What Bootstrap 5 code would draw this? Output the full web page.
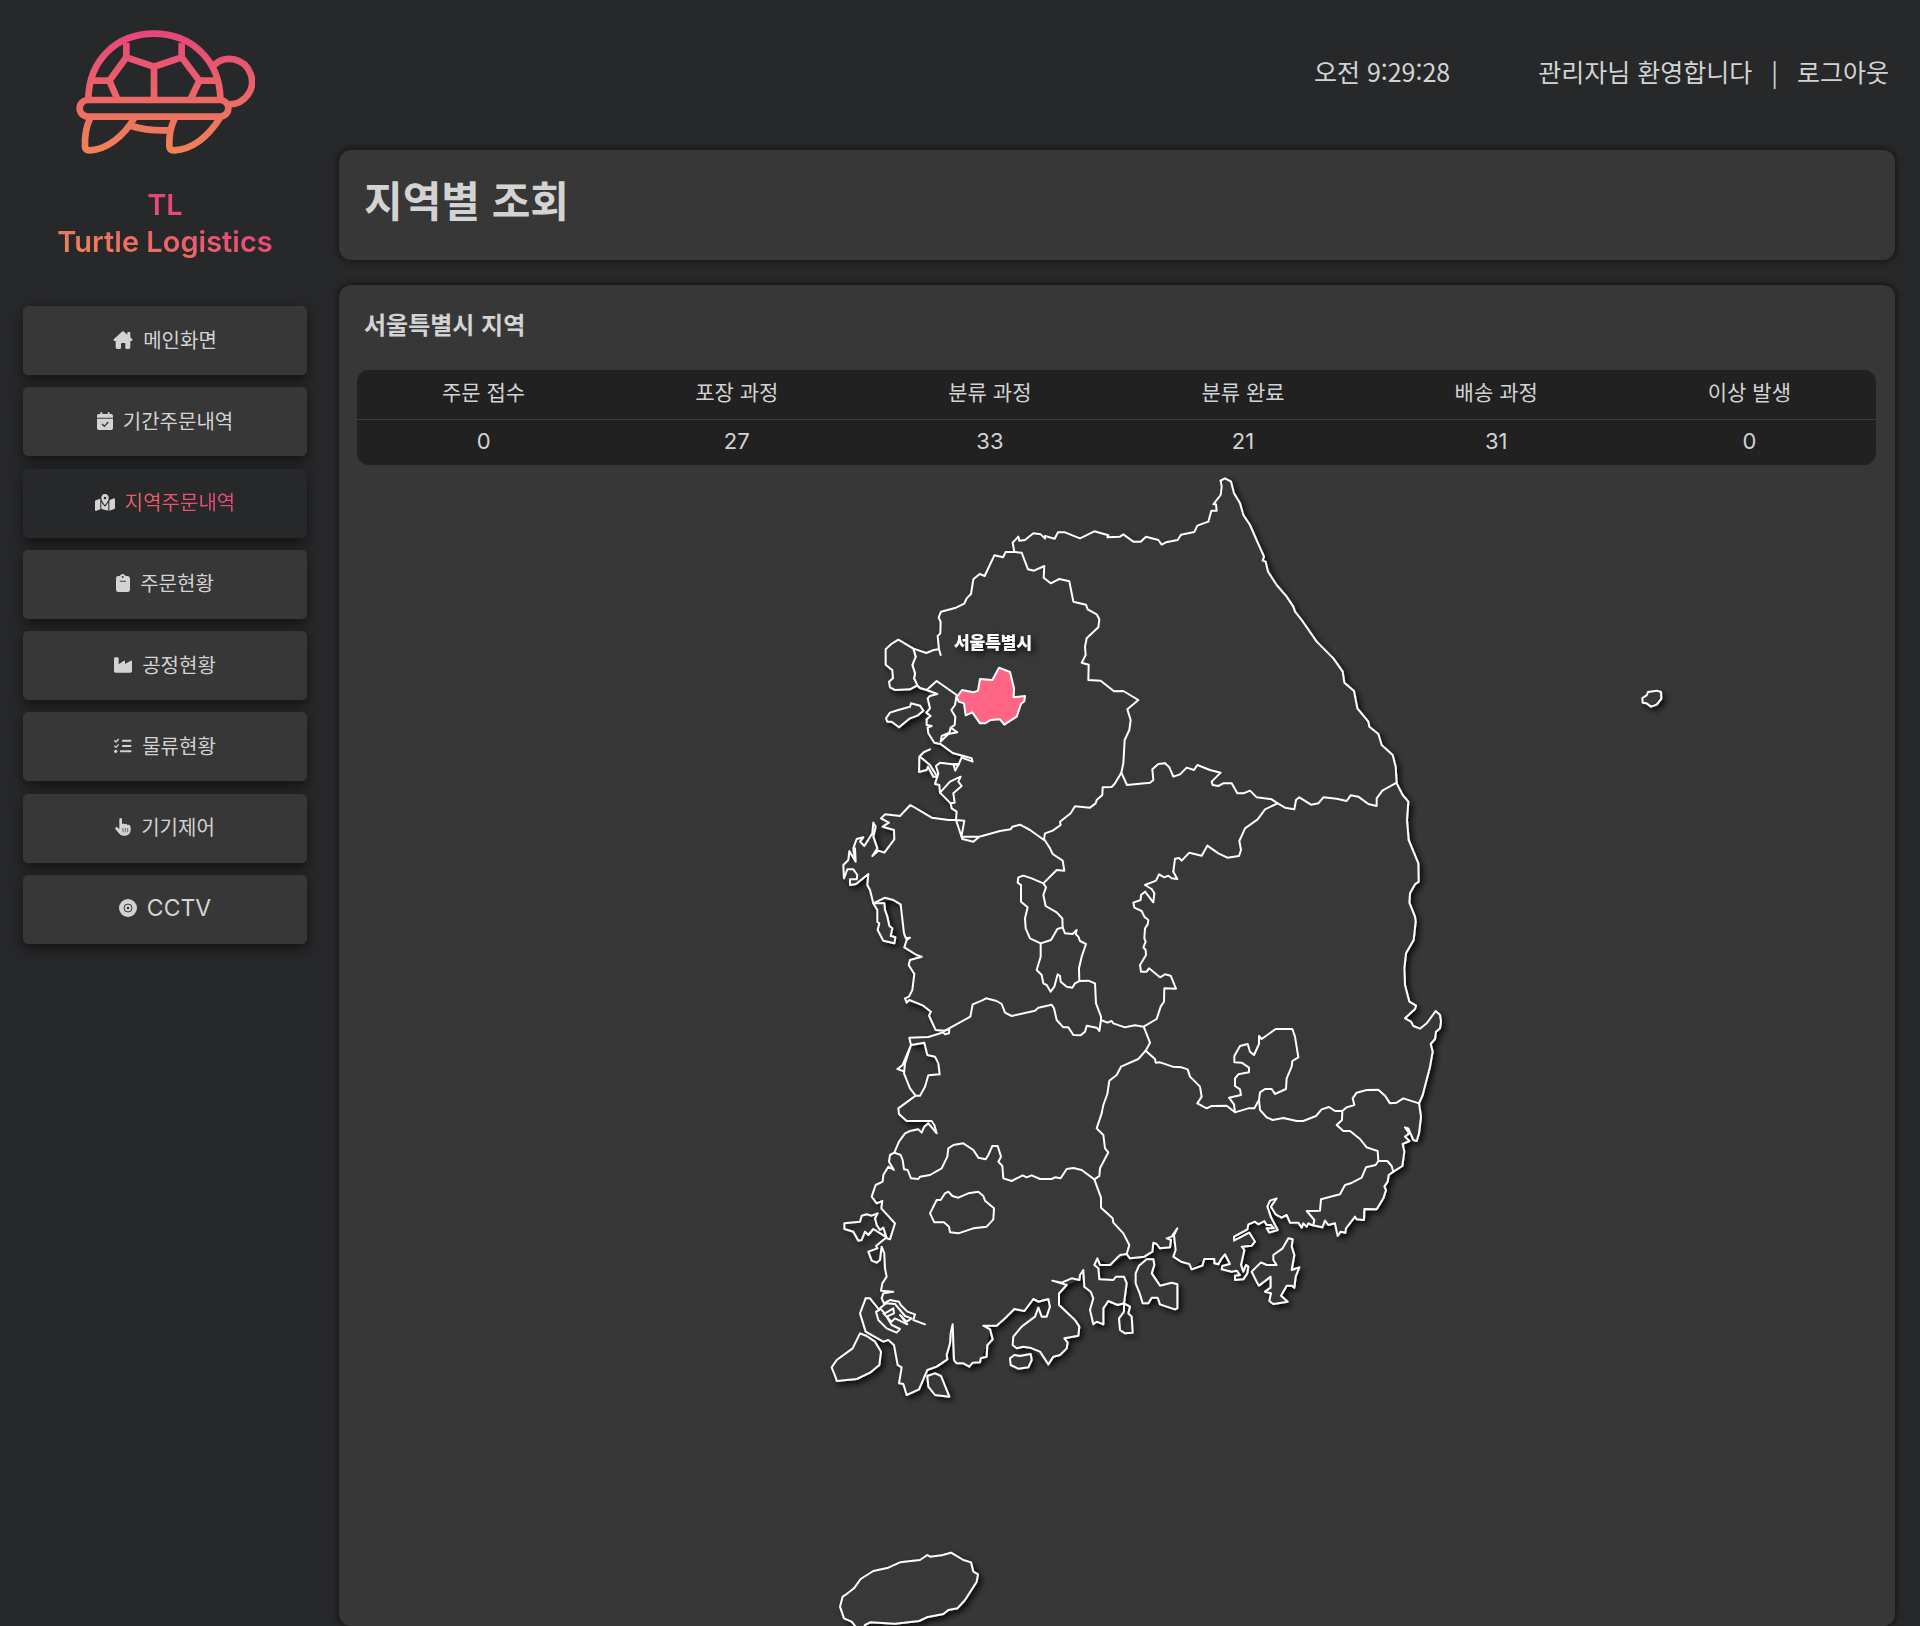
<!DOCTYPE html>
<html lang="ko" data-bs-theme="dark">
<head>
<meta charset="utf-8">
<meta name="viewport" content="width=device-width, initial-scale=1">
<title>Turtle Logistics</title>
<link rel="stylesheet" href="https://cdn.jsdelivr.net/npm/bootstrap@5.3.0/dist/css/bootstrap.min.css">
<style>
body{background:#27282a;color:#d3d3d3;font-family:"Noto Sans CJK KR",sans-serif}
.side{width:330px;padding:0 23px}
.brand{height:306px;padding-top:29px;text-decoration:none}
.brand-name{font:600 29px/37px Inter,sans-serif;background:linear-gradient(to top right,#f08355 10%,#e6457b 65%);-webkit-background-clip:text;background-clip:text;color:transparent;margin-top:31px}
.menu{height:638px}
.menu-item{height:69px;gap:10px;padding-bottom:2px;border-radius:5px;background:#373737;color:#d3d3d3;font-size:20px;line-height:28px;text-decoration:none;box-shadow:0 5px 14px rgba(0,0,0,.55)}
.menu-item svg{fill:#d3d3d3}
.menu-item.current{background:#27282a}
.menu-item.current span{background:linear-gradient(to right,#ee6068,#e2467c);-webkit-background-clip:text;background-clip:text;color:transparent}
.menu-item .latin{font-family:Inter,sans-serif;font-size:23px}
.content-area{min-width:0;padding:0 25px 0 9px}
.topline{height:150px;padding:0 6px 8px 0;font-size:25px;line-height:36px}
.topline a{color:inherit;text-decoration:none}
.clock{margin-right:88px}
.bar{margin:0 19px}
.panel{background:#373737;border-radius:12px;box-shadow:0 0 8px rgba(0,0,0,.7)}
.panel h1,.panel h2{color:#d3d3d3;font-weight:700}
.panel-title{height:110px;padding:24px 25px;margin-bottom:25px}
.panel-title h1{font-size:42px;line-height:50px;margin:0}
.panel-map{padding:24px 19px 0 18px;overflow:hidden}
.panel-map h2{font-size:24px;line-height:30px;margin:0 7px 31px}
.stat-wrap{border-radius:12px;overflow:hidden;background:#212121}
.stat{width:100%;table-layout:fixed;text-align:center}
.stat th{height:49px;padding:0 0 6px;font-size:21px;line-height:30px;font-weight:400;border-bottom:1px solid #3b3b3b}
.stat td{height:46px;padding:0 0 3px;font-family:Inter,sans-serif;font-size:22px;line-height:30px}
.map{width:100%;height:auto}
.map path{fill:none;stroke:#fff;stroke-width:6;stroke-linejoin:round;stroke-linecap:round}
.map .ground,.map .isle{fill:#373737}
.map .seoul{fill:#ff6584}
.map text{font-size:17px;font-weight:900;fill:#fff;text-anchor:middle}
</style>
<script src="https://cdn.jsdelivr.net/npm/bootstrap@5.3.0/dist/js/bootstrap.bundle.min.js"></script>
</head>
<body>
<div class="d-flex min-vh-100">
<aside class="side flex-shrink-0">
  <a href="#" class="brand d-flex flex-column align-items-center text-center">
    <svg width="180" height="126" viewBox="225 87 540 378" fill="none" stroke="url(#lg)" stroke-width="20" stroke-linejoin="round" aria-hidden="true">
      <defs><linearGradient id="lg" gradientUnits="userSpaceOnUse" x1="0" y1="90" x2="0" y2="462"><stop stop-color="#e6457b"/><stop offset="1" stop-color="#f08355"/></linearGradient></defs>
      <path d="M265 294C268 180 350 101 462 101S658 180 661 294"/>
      <path d="M642 195A68 68 0 1 1 687 313"/>
      <rect x="239" y="300" width="446" height="50" rx="25"/>
      <path stroke-linejoin="miter" d="M379 128V172L328 242H275M379 172L462 200L545 172V128M545 172L598 242H655M462 200V300M328 242L352 297M598 242L572 297"/>
      <path d="M270 356C256 385 254 415 255 440Q257 452 270 451C320 448 370 410 402 356M524 356C509 385 507 415 508 440Q510 452 523 451C580 448 625 408 660 354M394 378Q440 393 506 391"/>
    </svg>
    <span class="brand-name">TL<br>Turtle Logistics</span>
  </a>
  <nav class="menu d-flex flex-column justify-content-between">
    <a href="#" class="menu-item d-flex align-items-center justify-content-center"><svg width="20" height="18" viewBox="0 0 60 54"><path d="M30 0Q31 0 33 2L43 11V5Q43 3 45 3H50Q52 3 52 5V19L58 25Q60 29 56 30H52V49Q52 54 47 54H41Q37 54 37 50V38Q37 36 35 36H27Q24 36 24 39V50Q24 54 20 54H13Q8 54 8 49V30H4Q0 29 2 25L27 2Q29 0 30 0Z"/></svg><span>메인화면</span></a>
    <a href="#" class="menu-item d-flex align-items-center justify-content-center"><svg width="16" height="18" viewBox="0 0 48 54"><path d="M10 2Q13 -2 16 2V6H32V2Q35 -2 38 2V6H43Q48 6 48 11V17H0V11Q0 6 5 6H10ZM0 20H48V49Q48 54 43 54H5Q0 54 0 49Z"/><path d="M15 36L22 43L34 30" fill="none" stroke="#373737" stroke-width="4"/></svg><span>기간주문내역</span></a>
    <a href="#" class="menu-item current d-flex align-items-center justify-content-center" aria-current="page"><svg width="20" height="17" viewBox="0 0 60 51"><path fill-rule="evenodd" d="M30 0Q41 1 41 12Q41 20 30 34Q19 20 19 12Q19 1 30 0ZM30 8A4 4 0 1 0 30 16A4 4 0 1 0 30 8Z"/><path d="M0 22Q0 20 2 19L16 14V46L3 51Q0 51 0 48ZM19 24Q26 35 30 38Q34 35 40 25V50L19 45ZM43 19L57 13Q60 13 60 16V42Q60 44 58 45L43 50Z"/></svg><span>지역주문내역</span></a>
    <a href="#" class="menu-item d-flex align-items-center justify-content-center"><svg width="14" height="18" viewBox="0 0 42 54"><path fill-rule="evenodd" d="M11 6Q14 0 20 0Q26 0 29 6H35Q42 7 42 13V47Q42 54 35 54H7Q0 54 0 47V13Q0 6 7 6ZM20 6A3 3 0 1 0 20 12A3 3 0 1 0 20 6ZM11 20V23H30V20Z"/></svg><span>주문현황</span></a>
    <a href="#" class="menu-item d-flex align-items-center justify-content-center"><svg width="18" height="16" viewBox="0 0 54 46"><path d="M0 4Q0 0 4 0H10Q14 0 14 4V21L30 10Q33 9 33 12V20L50 10Q54 9 54 13V41Q54 46 49 46H5Q0 46 0 41Z"/></svg><span>공정현황</span></a>
    <a href="#" class="menu-item d-flex align-items-center justify-content-center"><svg width="18" height="16" viewBox="0 0 54 46"><path d="M1 6L6 11L14 2M1 22L6 27L14 18" fill="none" stroke="#d3d3d3" stroke-width="4"/><path d="M25 4H51Q54 7 51 10H25Q22 7 25 4ZM25 20H51Q54 23 51 26H25Q22 23 25 20ZM19 36H51Q54 39 51 42H19Q16 39 19 36Z"/><circle cx="5" cy="39" r="5"/></svg><span>물류현황</span></a>
    <a href="#" class="menu-item d-flex align-items-center justify-content-center"><svg width="16" height="18" viewBox="0 0 48 54"><path d="M13 4Q13 0 17 0Q21 0 21 4V19Q25 14 29 19Q34 15 37 21Q45 18 47 27V37Q46 51 32 53H25Q18 53 13 47L1 33Q-1 28 4 27Q7 27 13 33Z"/><path d="M24 30V43M31 30V43M38 30V43" stroke="#373737" stroke-width="2"/></svg><span>기기제어</span></a>
    <a href="#" class="menu-item d-flex align-items-center justify-content-center"><svg width="18" height="18" viewBox="0 0 54 54"><circle cx="27" cy="27" r="27"/><circle cx="27" cy="27" r="12" fill="none" stroke="#373737" stroke-width="3"/><circle cx="27" cy="27" r="4" fill="#373737"/></svg><span class="latin">CCTV</span></a>
  </nav>
</aside>
<main class="content-area flex-grow-1 d-flex flex-column">
  <header class="topline d-flex align-items-center justify-content-end">
    <time class="clock">오전 9:29:28</time><span>관리자님 환영합니다</span><span class="bar">|</span><a href="#">로그아웃</a>
  </header>
  <section class="panel panel-title"><h1>지역별 조회</h1></section>
  <section class="panel panel-map flex-grow-1">
    <h2>서울특별시 지역</h2>
    <div class="stat-wrap"><table class="stat">
      <thead><tr><th scope="col">주문 접수</th><th scope="col">포장 과정</th><th scope="col">분류 과정</th><th scope="col">분류 완료</th><th scope="col">배송 과정</th><th scope="col">이상 발생</th></tr></thead>
      <tbody><tr><td>0</td><td>27</td><td>33</td><td>21</td><td>31</td><td>0</td></tr></tbody>
    </table></div>
    <svg class="map d-block" viewBox="357 465 1519 1161" role="img" aria-label="대한민국 지도">
      <defs><filter id="sh" filterUnits="userSpaceOnUse" x="357" y="465" width="1519" height="1200"><feDropShadow dx="3" dy="3" stdDeviation="3" flood-color="#000" flood-opacity=".8"/></filter></defs>
      <g filter="url(#sh)">
        <polygon class="ground" points="1014,552 1006,552 1003,557 994,555 985,576 980,574 973,579 971,594 964,604 941,612 939,617 941,622 938,636 939,649 926,653 913,649 912,665 917,685 927,690 930,696 926,713 928,733 934,743 941,744 953,753 972,758 962,758 958,765 940,763 936,766 935,784 940,793 951,803 957,812 956,820 932,818 910,805 900,816 885,814 881,818 883,827 894,830 894,839 884,853 878,851 873,837 872,833 864,846 857,839 853,848 855,860 843,865 844,878 850,885 856,884 868,874 867,885 870,890 873,903 893,900 901,904 904,933 909,938 904,947 917,955 910,960 909,965 914,974 912,990 907,1002 923,1006 931,1012 936,1030 945,1031 928,1037 909,1038 911,1045 924,1043 927,1055 935,1057 940,1074 928,1075 925,1087 920,1096 916,1096 898,1108 899,1114 907,1121 932,1121 924,1127 905,1133 894,1153 889,1162 883,1175 872,1197 882,1201 881,1208 895,1223 890,1239 883,1240 885,1268 881,1291 884,1303 880,1308 878,1312 866,1298 860,1313 866,1332 883,1340 894,1345 898,1365 902,1367 899,1383 907,1395 919,1389 927,1370 947,1359 953,1324 954,1360 969,1367 980,1362 987,1345 990,1330 983,1326 997,1326 1014,1309 1024,1311 1033,1299 1048,1299 1050,1307 1047,1317 1042,1317 1038,1308 1022,1327 1012,1340 1017,1348 1030,1348 1048,1364 1053,1357 1067,1348 1064,1338 1078,1336 1079,1327 1059,1305 1060,1292 1067,1285 1079,1280 1083,1270 1084,1287 1093,1298 1090,1310 1093,1324 1103,1324 1103,1308 1108,1301 1124,1304 1127,1283 1124,1277 1113,1280 1099,1279 1098,1268 1097,1258 1110,1265 1127,1254 1130,1258 1144,1257 1152,1252 1153,1243 1160,1248 1170,1247 1175,1230 1173,1257 1192,1269 1204,1259 1214,1259 1218,1264 1225,1254 1230,1264 1222,1269 1240,1275 1241,1265 1244,1250 1242,1247 1255,1242 1248,1233 1234,1240 1234,1237 1247,1229 1248,1224 1264,1221 1273,1231 1278,1230 1271,1217 1267,1207 1277,1198 1271,1207 1276,1214 1287,1215 1290,1223 1302,1228 1312,1225 1322,1227 1335,1223 1338,1236 1345,1233 1355,1217 1364,1220 1364,1209 1377,1209 1386,1190 1389,1175 1393,1172 1402,1166 1404,1152 1403,1144 1409,1141 1405,1127 1408,1128 1413,1140 1417,1141 1421,1117 1419,1103 1423,1095 1430,1067 1433,1052 1431,1044 1436,1032 1441,1022 1436,1011 1420,1029 1413,1026 1405,1018 1416,1006 1409,1002 1405,985 1404,968 1406,953 1414,940 1416,922 1409,903 1410,893 1415,884 1419,882 1418,863 1409,840 1407,820 1408,802 1397,783 1396,767 1393,755 1382,745 1378,734 1369,727 1357,708 1354,691 1344,683 1343,672 1333,658 1317,642 1295,612 1277,585 1266,562 1258,543 1243,515 1231,482 1225,478 1221,481 1221,495 1216,511 1208,522 1194,532 1178,540 1162,545 1146,537 1130,540 1123,534 1094,531 1080,538 1058,532 1045,539 1033,533 1018,538 1013,543"/>
        <!-- north-west coast and Incheon -->
        <g transform="translate(830 460) scale(.333333)">
          <path d="M553 276L527 276 519 292 493 286 464 348 449 342 430 358 423 402 410 415 403 431 378 443 333 455 326 472 332 486 331 520 323 528 327 568 332 585 327 568 311 570 289 579 250 566 257 590 247 615 255 640 252 655 262 676 270 684 290 690 322 702 300 708 293 715 300 745 289 758 302 768 290 778 290 795 305 798 293 803 295 820 313 848 332 852 368 879 425 895 428 905 395 893 385 915 330 908 318 918 325 940 315 972 328 975 330 998 362 1030 365 1045 380 1055 378 1080"/>
          <path class="isle" d="M250 566L205 539 184 552 167 568 167 614 180 625 187 630 189 655 177 665 180 682 195 690 240 688 262 676 252 655 255 640 247 615 257 590Z"/>
          <path class="isle" d="M168 775L180 758 205 750 240 740 243 730 270 737 280 752 262 767 240 775 207 802 185 785 172 785Z"/>
          <path d="M300 868L282 876 268 890 267 936 290 930 294 920 310 950 322 950 300 915 272 892"/>
          <path d="M370 912L376 932 386 912Z"/>
          <path d="M378 1080L355 1080 305 1073 241 1035 210 1068 165 1063 153 1075 177 1088 158 1100 192 1110 193 1138 163 1178 145 1172 127 1188 142 1165 130 1130 137 1100 130 1088 127 1120 103 1158 90 1145 100 1132 80 1137 70 1165 75 1200"/>
        </g>
        <!-- east coast, north part -->
        <g transform="translate(1130 460) scale(.333333)">
          <path d="M272 62L285 55 303 65 312 100 330 130 340 165 360 195 383 248 402 290 398 302 407 305 414 335 440 375 470 410 490 440 495 455 515 480 560 545 610 595 638 635 643 668 672 693 682 745 715 785 718 800 745 822 755 855 788 885 797 920 800 970 818 1005 835 1025 831 1080 836 1140"/>
        </g>
        <!-- west coast -->
        <g transform="translate(830 840) scale(.333333)">
          <path d="M75 25L77 65 58 33 55 60 40 75 42 115 52 88 70 88 82 105 80 118 60 118 60 135 78 132 115 102 112 135 120 150 130 190 165 173 190 180 212 193 222 280 228 295 240 293 230 300 223 322 260 345 275 350 240 360 236 375 253 402 247 450 237 470 225 475 230 488 238 480 280 497 303 515 297 527 317 570 345 572 358 567 357 580 345 583 340 577 295 591 238 593 243 615 283 608 292 645 315 650 325 670 329 703 295 706 285 740 270 767 257 767 205 805 207 822 230 843 305 843 313 855 320 880 295 850 283 860 275 878 265 868 240 873 225 880 207 905 193 938"/>
          <path class="isle" d="M130 190L163 190 165 210 172 230 178 258 187 265 182 288 196 292 193 310 160 302 143 270 148 250 142 245 142 210Z"/>
        </g>
        <!-- east coast, south part -->
        <g transform="translate(1130 840) scale(.333333)">
          <path d="M836 0L865 70 866 125 855 133 840 160 838 188 855 230 857 245 851 300 828 340 823 385 825 435 838 485 858 497 855 507 825 535 843 545 850 558 870 566 890 550 917 513 930 525 933 545 930 565 918 575 915 597 902 612 908 635 900 680 878 765 867 790 873 830 867 880 860 903 850 900 835 865 825 862 838 880 825 890 838 903 818 912 823 935 817 978 790 995"/>
        </g>
        <!-- south coast -->
        <g transform="translate(1110 1130) scale(.333333)">
          <path d="M850 125L836 135 833 155 823 170 828 180 820 205 800 238 763 237 762 270 740 268 735 260 708 295 706 308 692 305 683 318 675 280 655 285 645 272 637 292 605 285 595 280 590 290 580 280 575 293 565 278 540 278 530 255 515 263 497 253 483 230 500 205 480 212 472 230 483 262 490 275 503 300 478 308 470 295 492 295 483 285 470 285 463 273 445 283 435 275 415 283 412 298 372 320 372 332 418 308 435 335 425 347 395 350 403 360 393 405 400 425 408 405 415 410 412 430 400 448 375 450 375 437 390 435 380 422 365 425 335 418 337 408 360 402 345 373 335 385 325 403 313 400 313 387 283 387 277 407 245 418 238 402 213 395 190 380 197 360 192 315 202 295 185 320 170 325 183 330 180 352 150 355 140 342 130 338 127 365 103 380 60 385 50 372"/>
          <path class="isle" d="M425 425L453 397 470 405 500 405 490 390 490 375 518 355 535 325 548 328 545 350 553 375 545 420 568 412 557 440 553 473 545 467 530 467 513 497 533 515 490 522 478 513 483 490 465 485 482 473 482 440 447 467 440 455Z"/>
          <path class="isle" d="M110 388L130 388 133 405 125 430 150 467 185 458 202 463 202 535 195 538 150 523 143 503 125 503 115 520 98 520 88 487 77 460 77 430 87 407Z"/>
        </g>
        <!-- south-west coast -->
        <g transform="translate(820 1130) scale(.333333)">
          <path d="M223 68L210 75 207 95 222 120 205 110 190 135 188 155 167 165 155 200 170 220 187 213 184 235 225 280 210 328 200 325 190 293 180 300 170 285 165 265 173 250 155 257 140 253 125 257 120 275 73 280 73 297 100 305 115 332 125 330 135 305 145 315 160 297 200 322 168 348 172 355 145 365 155 392 170 398 180 390 185 350 193 370 195 415 200 440 187 460 183 482 220 485 190 490 185 505 192 520 210 510 237 515 242 525 262 545 285 553 280 570 315 583"/>
          <path d="M137 505L150 505 178 540 168 545 175 570 200 595 230 608 240 597 215 585 200 560 222 550 220 535 195 550 180 535 198 520 225 522 240 540 255 558 275 565 260 575 240 555 262 583 225 565 215 575 190 550"/>
          <path d="M137 505L120 550 137 605 190 635 205 630 222 645 233 705 245 712 237 760 250 762 260 795 297 778 322 720 350 710 382 688 380 675 390 640 392 610 398 583 402 690 410 700 430 700 448 710 458 698 480 697 482 685 500 680 502 645 518 628 510 598 490 587 530 587 560 560 583 537 613 543 640 507 655 515 685 507 690 530 680 560 665 560 655 533 645 560 605 590 580 620 578 645 590 655 610 650 630 653 660 665 685 703 700 680 720 675 740 655 743 638 733 625 775 617 778 590 765 570 717 525 717 490 740 465 697 452 725 458 755 445 778 450 780 435 790 420 793 470 812 485 820 505 810 540 820 583 830 575 850 583 850 535 865 513 893 525 912 520 912 545 897 565 900 600 915 610 938 608 935 560 925 550 930 530 912 520 920 460 912 440 888 440 880 450 838 448 835 415 823 405 832 385 840 405 870 405 900 375 920 372"/>
          <path class="isle" d="M120 610L140 618 165 635 183 665 178 705 150 728 110 747 50 753 47 742 35 712 50 690 98 655Z"/>
          <path class="isle" d="M583 675L570 685 572 705 595 716 625 712 635 690 632 672 600 678Z"/>
          <path class="isle" d="M322 738L345 730 363 738 388 800 345 795 325 770Z"/>
        </g>
        <!-- Jeju and Ulleungdo -->
        <g transform="translate(820 1530) scale(.333333)">
          <path class="isle" d="M115 300L95 275 72 265 60 230 68 200 80 192 102 175 122 147 160 123 205 113 240 97 300 90 322 75 330 80 365 76 393 68 430 90 453 97 460 125 474 133 470 155 435 210 412 235 385 240 370 252 320 262 297 273 225 281 150 277 135 285 128 300Z"/>
          <path class="isle" d="M2467-2496L2480-2504 2484-2514 2510-2518 2523-2514 2524-2494 2510-2476 2493-2470 2480-2480 2468-2482Z"/>
        </g>
      </g>
      <!-- inner province borders -->
      <g>
        <g transform="translate(830 460) scale(.333333)">
          <path d="M553 276L548 248 565 230 568 242 585 240 610 220 632 223 645 236 645 228 674 236 684 217 705 217 750 235 793 214 835 226 832 232 870 230 880 223 910 245 932 245 948 230 985 240 995 254 1008 247 1043 240 1053 224 1093 216 1102 197 1135 185 1144 152 1160 152 1158 133 1150 133 1172 105 1175 80 1172 62"/>
          <path d="M553 276L575 278 594 328 612 332 643 318 641 353 662 370 688 357 718 364 730 425 768 434 773 448 800 463 808 478 805 502 770 535 765 560 767 585 755 608 776 614 775 660 812 662 852 694 880 693 925 720 892 748 902 780 898 810 884 840 880 910 874 938 891 975 960 968 970 960 967 928 985 912 1005 910"/>
          <path d="M874 938L855 970 845 981 818 982 817 1005 800 1020 797 1030 780 1043 735 1039 722 1060 690 1085 692 1095 668 1112 645 1120 642 1137 660 1165 668 1182 698 1202 703 1232 680 1230 640 1270"/>
          <path d="M378 1080L403 1082 397 1115 394 1130 448 1130 430 1145 397 1137 378 1080M448 1130L510 1113 542 1108 547 1100 570 1094 600 1110 642 1140"/>
          <path d="M290 690L320 663 380 705 375 735 364 750 376 770 374 795 362 803 382 817 355 822 332 845 335 828 358 818 362 803M330 998L360 965 392 950 385 965 395 978 370 1000 374 1028 362 1030"/>
          <path class="seoul" d="M380 712L396 690 430 697 444 692 450 657 487 660 507 623 540 636 552 685 551 712 585 708 583 724 573 732 560 770 523 794 510 778 482 780 465 790 450 790 427 757 407 766 402 730 386 725Z"/>
        </g>
        <g transform="translate(1130 460) scale(.333333)">
          <path d="M105 910L118 922 130 950 150 943 170 923 192 930 202 915 240 930 272 938 245 965 248 975 265 978 280 970 305 970 322 1000 340 1000 360 992 380 1012 425 1018 443 1030 465 1043 493 1048 498 1020 508 1012 543 1034 565 1030 580 1012 620 1016 650 1023 662 1006 685 1010 715 1032 740 1038 740 1015 757 992 800 968"/>
          <path d="M443 1030L405 1048 383 1078 345 1105 328 1143 333 1170 327 1188 292 1193 265 1180 232 1157 215 1187 178 1178 155 1202 147 1194 135 1196 130 1235"/>
        </g>
        <g transform="translate(830 840) scale(.333333)">
          <path d="M345 572L421 530 428 493 455 482 468 475 500 483 515 492 525 518 545 528 615 512 625 503 665 494 672 505 680 540 700 562 715 562 730 585 752 586 765 575 770 557 800 563 808 573 813 540"/>
          <path d="M640 130L605 115 580 107 565 112 563 128 573 135 573 185 593 202 585 235 587 265 600 295 632 310 663 300 682 267 698 262 697 235 680 217 647 198 640 165 648 142Z"/>
          <path d="M632 310L632 350 620 390 635 405 640 430 650 435 662 455 673 440 683 403 690 408 692 425 710 440 727 443 735 430 748 423 747 385 755 350 768 312 750 303 745 290 737 282 740 270 728 282 705 280 698 262M748 423L775 422 795 430 798 490 813 530 813 540 832 548 845 543 850 550 885 562 915 556 941 560 960 608 947 632 925 657 873 680 860 705 838 722 832 762 820 795 815 820 800 865 820 885 825 925 835 937 810 985 808 1008 793 1018"/>
          <path d="M243 615L218 675 202 687 222 694M257 767L240 745 222 700 225 670 243 615M193 938L212 945 218 960 222 988 233 990 243 1015 265 1017 270 1010 300 1005 335 985 352 950 355 925 370 915 400 910 430 930 445 953 467 958 475 945 487 918 503 918 513 950 505 965 517 978 520 1015 545 1023 578 1006 590 1012 605 1006 630 1017 665 1017 675 1012 692 1015 710 987 730 984 755 990 793 1018 813 1073 813 1103 848 1135 850 1148 880 1180 898 1215 890 1242"/>
        </g>
        <g transform="translate(1130 840) scale(.333333)">
          <path d="M130 95L142 117 125 115 115 107 103 112 87 103 78 122 45 135 65 147 73 160 70 187 45 155 33 165 32 180 10 188 13 203 35 213 43 230 55 240 53 253 45 265 43 295 47 305 40 322 47 330 48 345 30 375 33 395 50 395 57 385 90 412 105 403 122 407 138 446 103 445 102 485 92 500 80 537 41 560M47 632L75 657 77 668 90 667 128 680 155 682 173 688 180 710 210 740 215 770 202 790 230 805 245 798 290 797 315 817 355 805 373 805 387 780 390 757 405 747 425 747 435 762 468 747 470 715 485 680 487 663 505 652 495 590 487 567 437 567 395 597 387 588 387 612 372 645 360 635 353 612 330 618 313 648 313 667 335 668 357 683 357 697 325 703 315 715 315 738 330 748 333 765 297 773 312 793 315 817"/>
          <path d="M387 780L390 810 410 832 428 840 460 834 500 843 520 843 558 828 575 808 597 801 615 813 637 813 650 802 673 795 668 775 680 758 710 750 745 749 765 767 780 790 800 788 820 775 867 790M637 813L636 840 620 855 640 873 660 873 690 897 710 922 743 933 745 963 772 963 785 978 790 995M745 963L737 975 708 982 695 1013 662 1030 645 1035 630 1063 573 1078 570 1112 530 1113 553 1140 550 1155"/>
        </g>
        <g transform="translate(820 1130) scale(.333333)">
          <path d="M330 250L350 210 362 210 375 190 385 185 397 198 415 203 445 190 475 185 490 198 495 212 522 235 520 268 500 290 460 295 415 310 390 307 387 290 372 277 343 277Z"/>
        </g>
      </g>
      <text x="993" y="649" filter="url(#sh)">서울특별시</text>
    </svg>
  </section>
</main>
</div>
</body>
</html>
